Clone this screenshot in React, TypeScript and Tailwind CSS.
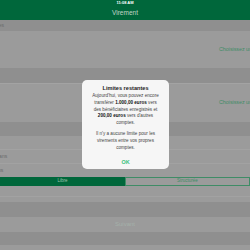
import React from "react";

export default function App() {
  const font = { fontFamily: '"Liberation Sans", Arial, sans-serif' };
  return (
    <div className="relative w-[250px] h-[250px] overflow-hidden bg-[#9b9b9b]" style={font}>
      {/* status + nav */}
      <div className="h-[20px] bg-[#00673b] flex flex-col items-center">
        <div className="text-[4px] font-bold text-white leading-[4px] mt-[1px]">11:08 AM</div>
        <div className="text-[6.5px] text-[#c2d6ca] leading-[7px] mt-[4px]">Virement</div>
      </div>
      {/* band 1 */}
      <div className="h-[11px] bg-[#8f8f8f] flex items-center overflow-hidden">
        <span className="text-[5px] text-[#6a6a6a] ml-[-16px]">Comptes</span>
      </div>
      {/* row 1 */}
      <div className="h-[37px] bg-[#9b9b9b] flex items-center overflow-hidden">
        <span className="ml-[219px] whitespace-nowrap text-[5.3px] text-[#3f8c66]">Choisissez un compte</span>
      </div>
      {/* band 2 */}
      <div className="h-[15px] bg-[#8f8f8f]" />
      {/* row 2 */}
      <div className="h-[39px] bg-[#9b9b9b] border-t border-[#a3a3a3] flex items-center overflow-hidden">
        <span className="ml-[219px] whitespace-nowrap text-[5.3px] text-[#3f8c66]">Choisissez un compte</span>
      </div>
      {/* band 3 */}
      <div className="h-[14px] bg-[#8f8f8f]" />
      {/* rows */}
      <div className="h-[14px] bg-[#9b9b9b] border-b border-[#a2a2a2]" />
      <div className="h-[14px] bg-[#9b9b9b] border-b border-[#a2a2a2] flex items-center overflow-hidden">
        <span className="text-[5px] text-[#6a6a6a] ml-[-12px]">Montans</span>
      </div>
      <div className="h-[13px] bg-[#9b9b9b] flex items-center overflow-hidden">
        <span className="text-[5px] text-[#6a6a6a] ml-[-14px]">Options</span>
      </div>
      {/* segmented */}
      <div className="h-[9px] flex">
        <div className="w-[125px] bg-[#00673b] flex items-center justify-center text-[4.5px] text-[#9ec4ae]">Libre</div>
        <div className="flex-1 border border-[#3f8c66] bg-[#9b9b9b] flex items-center justify-center text-[4.5px] text-[#3f8c66]">Structurée</div>
      </div>
      <div className="h-[11px] bg-[#9b9b9b] border-b border-[#a2a2a2]" />
      <div className="h-[5px] bg-[#9b9b9b]" />
      <div className="h-[15px] bg-[#8f8f8f]" />
      <div className="h-[15px] bg-[#9b9b9b] flex items-center justify-center">
        <span className="text-[6px] text-[#a5b1aa]">Suivant</span>
      </div>
      <div className="h-[13px] bg-[#8f8f8f]" />

      {/* dialog */}
      <div className="absolute left-[82px] top-[80px] w-[87px] h-[89px] bg-[#f6f6f6] rounded-[5px] flex flex-col items-center text-center text-[#333]">
        <div className="mt-[5px] text-[5.6px] font-bold leading-[7px] text-[#222]">Limites restantes</div>
        <div className="mt-[1px] text-[4.6px] leading-[6.8px] text-[#444]">
          <div>Aujourd'hui, vous pouvez encore</div>
          <div>transférer <b className="text-[#111]">1.000,00 euros</b> vers</div>
          <div>des bénéficiaires enregistrés et</div>
          <div><b className="text-[#111]">200,00 euros</b> vers d'autres</div>
          <div>comptes.</div>
          <div className="h-[4px]" />
          <div>Il n'y a aucune limite pour les</div>
          <div>virements entre vos propres</div>
          <div>comptes.</div>
        </div>
        <div className="mt-[8px] text-[5.5px] font-bold text-[#3cc27e] leading-[7px]">OK</div>
      </div>
    </div>
  );
}
